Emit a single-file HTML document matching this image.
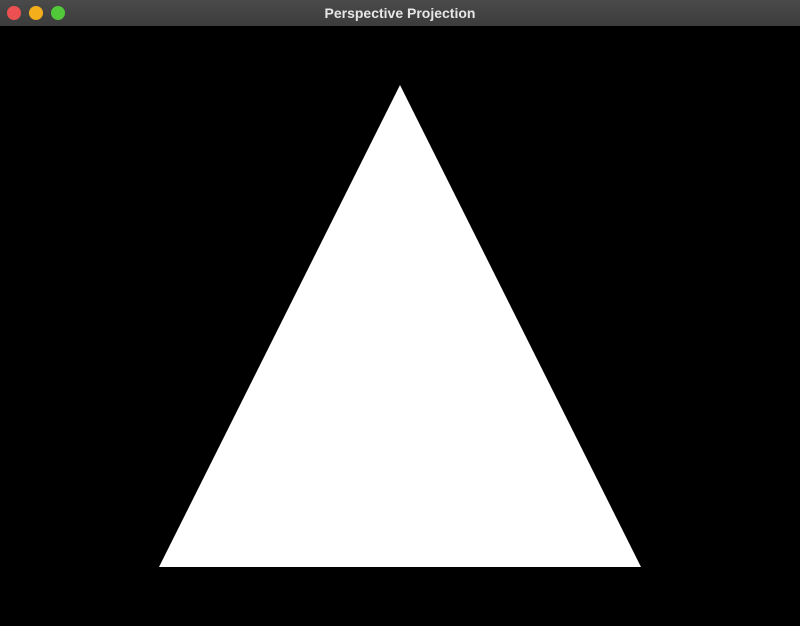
<!DOCTYPE html>
<html><head><style>
html,body{margin:0;padding:0;width:800px;height:626px;overflow:hidden;background:#000}
.bar{position:absolute;left:0;top:0;width:800px;height:26px;background:linear-gradient(#4a4a4a,#3c3c3c);}
.c{position:absolute;top:6px;width:14px;height:14px;border-radius:50%}
.t{position:absolute;top:0;left:0;width:800px;text-align:center;color:#e6e6e6;font:bold 14px "Liberation Sans","DejaVu Sans",sans-serif;line-height:26px}
</style></head><body>
<div class="bar">
<div class="c" style="left:7px;background:#ec5050"></div>
<div class="c" style="left:29px;background:#f4ae1c"></div>
<div class="c" style="left:51px;background:#52c93a"></div>
<div class="t">Perspective Projection</div>
</div>
<svg style="position:absolute;left:0;top:0" width="800" height="626"><polygon points="400,85 641,567 159,567" fill="#fff"/></svg>
</body></html>
